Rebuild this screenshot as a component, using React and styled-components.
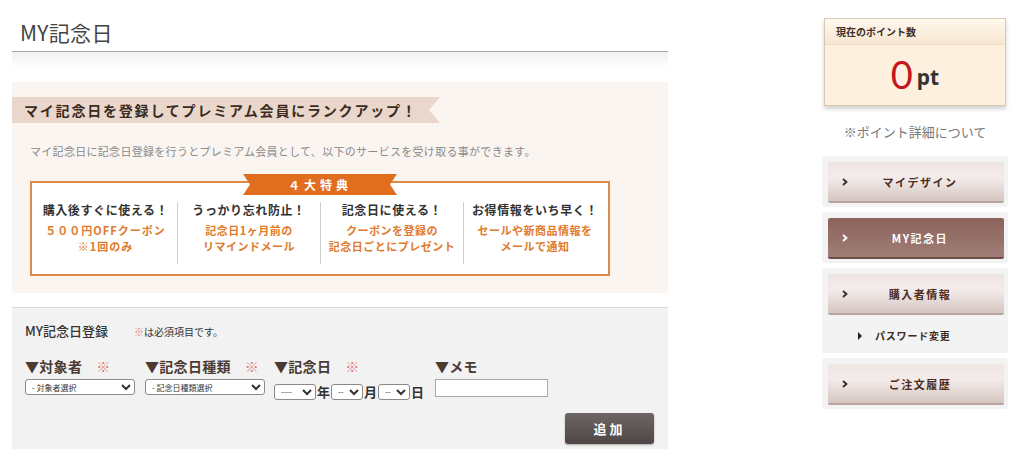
import React from "react";
import styled, { createGlobalStyle } from "styled-components";

const Global = createGlobalStyle`
  html, body { margin: 0; padding: 0; background: #fff; }
  body { font-family: "Noto Sans CJK JP", "Noto Sans", sans-serif; color: #333; }
  * { box-sizing: border-box; }
`;

const Page = styled.div`
  display: flex;
  width: 1024px;
  height: 449px;
  overflow: hidden;
  padding-left: 12px;
  padding-right: 16px;
  justify-content: space-between;
`;

const Main = styled.div`
  width: 656px;
  display: flex;
  flex-direction: column;
`;

const TitleBar = styled.div`
  height: 52px;
  border-bottom: 1px solid #a8a8a8;
  display: flex;
  align-items: flex-end;
  padding: 0 0 6px 8px;
`;

const Title = styled.h1`
  margin: 0;
  font-size: 21px;
  font-weight: 400;
  color: #444;
  letter-spacing: 0.3px;
  line-height: 26px;
`;

const TitleShade = styled.div`
  height: 16px;
  background: linear-gradient(#f1f1f1, #fff);
  margin-bottom: 14px;
`;

const Promo = styled.section`
  background: #fbf5f1;
  height: 211px;
  padding-top: 15px;
  display: flex;
  flex-direction: column;
`;

const Banner = styled.div`
  width: 428px;
  height: 26px;
  background: #e9d7cc;
  clip-path: polygon(0 0, 100% 0, calc(100% - 11px) 50%, 100% 100%, 0 100%);
  display: flex;
  align-items: center;
  padding-left: 12px;
  font-size: 14px;
  font-weight: 700;
  letter-spacing: 1.8px;
  color: #3b2a20;
  white-space: nowrap;
`;

const Lead = styled.p`
  margin: 20px 0 0 18px;
  font-size: 11px;
  color: #8a8a8a;
  letter-spacing: 0.3px;
  line-height: 16px;
`;

const Benefits = styled.div`
  position: relative;
  margin: 22px 0 0 18px;
  width: 580px;
  height: 95px;
  border: 2px solid #dc8a4a;
  background: #fff;
  display: grid;
  grid-template-columns: repeat(4, 1fr);
  padding: 19px 2px 10px;
`;

const Ribbon = styled.div`
  position: absolute;
  top: -9px;
  left: 211px;
  width: 154px;
  height: 21px;
  background: #e06e1e;
  clip-path: polygon(0 0, 100% 0, calc(100% - 7px) 50%, 100% 100%, 0 100%, 7px 50%);
  color: #fff;
  font-size: 12px;
  font-weight: 700;
  letter-spacing: 4px;
  display: flex;
  align-items: center;
  justify-content: center;
`;

const Benefit = styled.div`
  display: flex;
  flex-direction: column;
  align-items: center;
  border-left: ${(p) => (p.$first ? "none" : "1px solid #cfcfcf")};
`;

const BenefitHead = styled.div`
  font-size: 12px;
  font-weight: 700;
  color: #333;
  letter-spacing: 0.6px;
  line-height: 16px;
  margin-bottom: 4px;
`;

const BenefitText = styled.div`
  font-size: 11px;
  font-weight: 700;
  color: #e07a2c;
  text-align: center;
  line-height: 16px;
  letter-spacing: ${(p) => p.$ls || "0.5px"};
`;

const FormBox = styled.section`
  margin-top: 14px;
  flex: 1;
  background: #f2f2f2;
  border-top: 1px solid #d8d8d8;
  padding: 13px 0 0 13px;
  display: flex;
  flex-direction: column;
`;

const FormHead = styled.div`
  display: flex;
  align-items: baseline;
  gap: 26px;
`;

const FormTitle = styled.div`
  font-size: 13px;
  font-weight: 500;
  color: #333;
`;

const Note = styled.span`
  font-size: 10px;
  color: #333;
`;

const Req = styled.span`
  color: #e07878;
  margin-left: ${(p) => p.$ml || "0"};
`;

const Fields = styled.div`
  display: flex;
  margin-top: 17px;
`;

const Field = styled.div`
  width: ${(p) => p.$w};
  display: flex;
  flex-direction: column;
`;

const Label = styled.div`
  font-size: 14px;
  font-weight: 700;
  color: #4a3a32;
  line-height: 18px;
  white-space: nowrap;
  letter-spacing: 0.3px;
`;

const Select = styled.select`
  width: ${(p) => p.$w};
  height: 16px;
  margin-top: ${(p) => p.$mt || "4px"};
  font-size: 8px;
  font-family: "Noto Sans CJK JP", sans-serif;
  color: #333;
  border: 1px solid #8a8a8a;
  border-radius: 3px;
  background: #fff;
  padding: 0 2px;
`;

const DateRow = styled.div`
  display: flex;
  align-items: center;
  gap: 1px;
  margin-top: 7px;
  font-size: 13px;
  font-weight: 700;
  color: #333;
`;

const Memo = styled.input`
  width: 113px;
  height: 18px;
  margin-top: 4px;
  border: 1px solid #aaa;
  background: #fff;
`;

const Actions = styled.div`
  display: flex;
  justify-content: flex-end;
  padding-right: 14px;
  margin-top: 12px;
`;

const AddButton = styled.button`
  width: 89px;
  height: 31px;
  border: none;
  border-radius: 3px;
  background: linear-gradient(#6e6664, #4e4745);
  box-shadow: 0 1px 2px rgba(0, 0, 0, 0.3);
  color: #fff;
  font-family: "Noto Sans CJK JP", sans-serif;
  font-size: 13px;
  font-weight: 700;
  letter-spacing: 3px;
`;

const Side = styled.aside`
  width: 186px;
  display: flex;
  flex-direction: column;
  padding-top: 18px;
`;

const PointBox = styled.div`
  margin: 0 2px;
  height: 88px;
  border: 1px solid #d9c9b3;
  background: #fdf0df;
  box-shadow: 0 3px 4px rgba(0, 0, 0, 0.18);
  display: flex;
  flex-direction: column;
`;

const PointHead = styled.div`
  height: 26px;
  padding-left: 11px;
  display: flex;
  align-items: center;
  font-size: 10px;
  font-weight: 700;
  color: #3a2e28;
  background: linear-gradient(#fff8ee, #f7e6d0);
  border-bottom: 1px solid #efdcc4;
`;

const PointValue = styled.div`
  flex: 1;
  display: flex;
  align-items: center;
  justify-content: center;
  gap: 4px;
  padding-bottom: 2px;
`;

const Zero = styled.span`
  font-family: "Lato", "Noto Sans", sans-serif;
  font-size: 38px;
  font-weight: 400;
  color: #c4161c;
  line-height: 1;
`;

const Pt = styled.span`
  font-family: "Noto Sans", sans-serif;
  font-size: 21px;
  font-weight: 700;
  color: #333;
  margin-top: 6px;
`;

const PointLink = styled.div`
  text-align: center;
  font-size: 13px;
  color: #777;
  margin: 17px 0 15px;
  line-height: 18px;
`;

const NavGroup = styled.div`
  background: #f4f3f3;
  border-radius: 3px;
  padding: 6px 4px 4px 6px;
  margin-bottom: 5px;
`;

const NavButton = styled.div`
  position: relative;
  height: 41px;
  border-radius: 2px;
  display: flex;
  align-items: center;
  justify-content: center;
  padding-left: 8px;
  font-size: 11px;
  font-weight: 700;
  letter-spacing: 1.5px;
  color: ${(p) => (p.$active ? "#fff" : "#4a2c22")};
  background: ${(p) =>
    p.$active
      ? "linear-gradient(#8a625b, #a07e77)"
      : "linear-gradient(#efe6e3, #f3ecea 40%, #d5c5c1)"};
  border-bottom: 2px solid ${(p) => (p.$active ? "#6f4d47" : "#b8a39e")};
`;

const Chevron = styled.svg`
  position: absolute;
  left: 14px;
  top: 50%;
  margin-top: -4px;
`;

const SubItem = styled.div`
  display: flex;
  align-items: center;
  gap: 13px;
  padding: 13px 0 6px 30px;
  font-size: 10px;
  font-weight: 700;
  color: #3a2a22;
  letter-spacing: 0.8px;
`;

const Caret = styled.span`
  width: 0;
  height: 0;
  border-top: 4px solid transparent;
  border-bottom: 4px solid transparent;
  border-left: 4px solid #2a2020;
`;

const ChevronIcon = ({ color }) => (
  <Chevron width="6" height="8" viewBox="0 0 6 8">
    <polyline points="1,1 4.5,4 1,7" fill="none" stroke={color} strokeWidth="1.8" />
  </Chevron>
);

const benefits = [
  { head: "購入後すぐに使える！", lines: ["５００円OFFクーポン", "※1回のみ"], ls: "1px" },
  { head: "うっかり忘れ防止！", lines: ["記念日1ヶ月前の", "リマインドメール"] },
  { head: "記念日に使える！", lines: ["クーポンを登録の", "記念日ごとにプレゼント"] },
  { head: "お得情報をいち早く！", lines: ["セールや新商品情報を", "メールで通知"] },
];

const nav = [
  { label: "マイデザイン" },
  { label: "MY記念日", active: true },
  { label: "購入者情報", sub: "パスワード変更" },
  { label: "ご注文履歴" },
];

export default function App() {
  return (
    <>
      <Global />
      <Page>
        <Main>
          <TitleBar>
            <Title>MY記念日</Title>
          </TitleBar>
          <TitleShade />
          <Promo>
            <Banner>マイ記念日を登録してプレミアム会員にランクアップ！</Banner>
            <Lead>マイ記念日に記念日登録を行うとプレミアム会員として、以下のサービスを受け取る事ができます。</Lead>
            <Benefits>
              <Ribbon>４大特典</Ribbon>
              {benefits.map((b, i) => (
                <Benefit key={b.head} $first={i === 0}>
                  <BenefitHead>{b.head}</BenefitHead>
                  {b.lines.map((l) => (
                    <BenefitText key={l} $ls={b.ls}>
                      {l}
                    </BenefitText>
                  ))}
                </Benefit>
              ))}
            </Benefits>
          </Promo>
          <FormBox>
            <FormHead>
              <FormTitle>MY記念日登録</FormTitle>
              <Note>
                <Req>※</Req>は必須項目です。
              </Note>
            </FormHead>
            <Fields>
              <Field $w="120px">
                <Label>
                  ▼対象者<Req $ml="14px">※</Req>
                </Label>
                <Select $w="110px">
                  <option>- 対象者選択</option>
                </Select>
              </Field>
              <Field $w="129px">
                <Label>
                  ▼記念日種類<Req $ml="14px">※</Req>
                </Label>
                <Select $w="120px">
                  <option>- 記念日種類選択</option>
                </Select>
              </Field>
              <Field $w="161px">
                <Label>
                  ▼記念日<Req $ml="14px">※</Req>
                </Label>
                <DateRow>
                  <Select $w="42px" $mt="0">
                    <option>----</option>
                  </Select>
                  年
                  <Select $w="32px" $mt="0">
                    <option>--</option>
                  </Select>
                  月
                  <Select $w="32px" $mt="0">
                    <option>--</option>
                  </Select>
                  日
                </DateRow>
              </Field>
              <Field $w="120px">
                <Label>▼メモ</Label>
                <Memo type="text" />
              </Field>
            </Fields>
            <Actions>
              <AddButton>追加</AddButton>
            </Actions>
          </FormBox>
        </Main>
        <Side>
          <PointBox>
            <PointHead>現在のポイント数</PointHead>
            <PointValue>
              <Zero>0</Zero>
              <Pt>pt</Pt>
            </PointValue>
          </PointBox>
          <PointLink>※ポイント詳細について</PointLink>
          {nav.map((n) => (
            <NavGroup key={n.label}>
              <NavButton $active={n.active}>
                <ChevronIcon color={n.active ? "#fff" : "#3a2a22"} />
                {n.label}
              </NavButton>
              {n.sub && (
                <SubItem>
                  <Caret />
                  {n.sub}
                </SubItem>
              )}
            </NavGroup>
          ))}
        </Side>
      </Page>
    </>
  );
}
